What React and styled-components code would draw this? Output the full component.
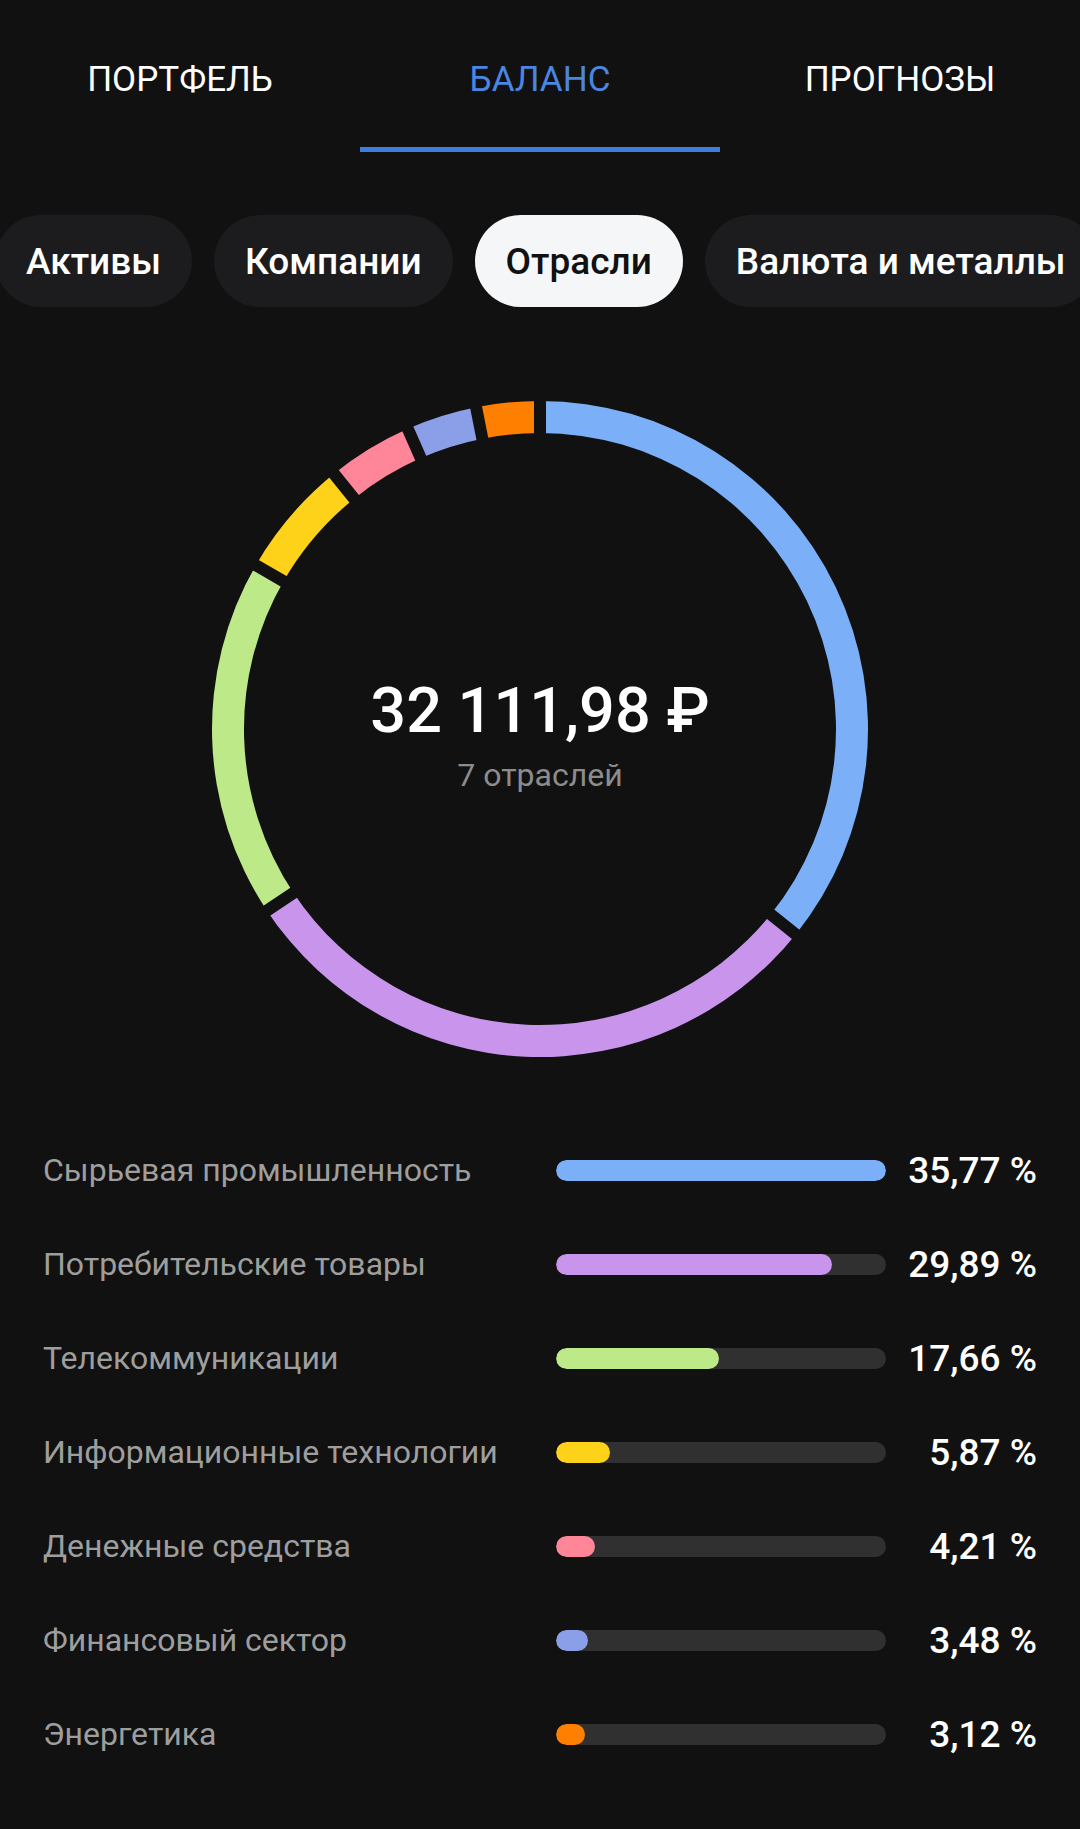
import React from "react";
import styled, { createGlobalStyle } from "styled-components";

const GlobalStyle = createGlobalStyle`
  html, body { margin: 0; padding: 0; background: #111111; }
  body { font-family: Roboto, "Noto Sans", "DejaVu Sans", sans-serif; color: #fff; }
  * { box-sizing: border-box; }
`;

const Page = styled.div`
  width: 1080px;
  min-height: 1829px;
  background: #111111;
  overflow: hidden;
`;

const Tabs = styled.nav`
  display: flex;
`;

const Tab = styled.div`
  flex: 1;
  display: flex;
  flex-direction: column;
`;

const TabLabel = styled.div`
  height: 147px;
  padding-top: 11px;
  display: flex;
  align-items: center;
  justify-content: center;
  font-size: 35px;
  font-weight: 400;
  color: ${(p) => (p.$active ? "#4a86e0" : "#ffffff")};
`;

const TabIndicator = styled.div`
  height: 5px;
  background: ${(p) => (p.$active ? "#3d7ce0" : "transparent")};
`;

const Chips = styled.div`
  display: flex;
  gap: 22px;
  margin: 63px 0 0 -5px;
  white-space: nowrap;
`;

const Chip = styled.div`
  flex: none;
  height: 92px;
  padding: 0 31px;
  border-radius: 46px;
  display: flex;
  align-items: center;
  font-size: 37px;
  font-weight: 500;
  background: ${(p) => (p.$active ? "#f5f6f8" : "#1c1c1e")};
  color: ${(p) => (p.$active ? "#111111" : "#ffffff")};
`;

const ChartWrap = styled.div`
  margin-top: 94px;
  display: grid;
  justify-content: center;
  & > * { grid-area: 1 / 1; }
`;

const Center = styled.div`
  display: flex;
  flex-direction: column;
  align-items: center;
  justify-content: center;
  padding-top: 12px;
  gap: 8px;
`;

const Total = styled.div`
  font-size: 63px;
  line-height: 72px;
  font-weight: 500;
  color: #ffffff;
`;

const Sub = styled.div`
  font-size: 32px;
  line-height: 40px;
  color: #8c8c8c;
`;

const List = styled.div`
  margin-top: 66px;
  display: flex;
  flex-direction: column;
`;

const Row = styled.div`
  height: 94px;
  padding: 0 43px;
  display: grid;
  grid-template-columns: 513px 330px 1fr;
  align-items: center;
`;

const Label = styled.div`
  font-size: 32px;
  color: #9e9e9e;
  white-space: nowrap;
`;

const Track = styled.div`
  height: 21px;
  border-radius: 11px;
  background: #303030;
  overflow: hidden;
`;

const Fill = styled.div`
  height: 100%;
  border-radius: 11px;
  background: ${(p) => p.$color};
`;

const Percent = styled.div`
  text-align: right;
  font-size: 37px;
  font-weight: 500;
  color: #ffffff;
`;

const items = [
  { name: "Сырьевая промышленность", value: 35.77, color: "#7bafF8" },
  { name: "Потребительские товары", value: 29.89, color: "#c995ec" },
  { name: "Телекоммуникации", value: 17.66, color: "#bde989" },
  { name: "Информационные технологии", value: 5.87, color: "#ffd21a" },
  { name: "Денежные средства", value: 4.21, color: "#ff8699" },
  { name: "Финансовый сектор", value: 3.48, color: "#8b9ee8" },
  { name: "Энергетика", value: 3.12, color: "#ff8000" },
];

const fmt = (v) => v.toFixed(2).replace(".", ",") + " %";

function Donut() {
  const size = 656;
  const c = size / 2;
  const rOut = 328;
  const rIn = 296;
  const total = items.reduce((s, i) => s + i.value, 0);
  const pt = (r, deg) => {
    const a = (deg * Math.PI) / 180;
    return [c + r * Math.sin(a), c - r * Math.cos(a)];
  };
  let acc = 0;
  const segs = [];
  const bounds = [];
  items.forEach((it) => {
    const a0 = (acc / total) * 360;
    acc += it.value;
    const a1 = (acc / total) * 360;
    bounds.push(a0);
    const large = a1 - a0 > 180 ? 1 : 0;
    const [x0, y0] = pt(rOut, a0);
    const [x1, y1] = pt(rOut, a1);
    const [x2, y2] = pt(rIn, a1);
    const [x3, y3] = pt(rIn, a0);
    segs.push(
      <path
        key={it.name}
        fill={it.color}
        d={`M${x0} ${y0} A${rOut} ${rOut} 0 ${large} 1 ${x1} ${y1} L${x2} ${y2} A${rIn} ${rIn} 0 ${large} 0 ${x3} ${y3} Z`}
      />
    );
  });
  return (
    <svg width={size} height={size} viewBox={`0 0 ${size} ${size}`}>
      {segs}
      {bounds.map((a) => {
        const [x0, y0] = pt(rIn - 6, a);
        const [x1, y1] = pt(rOut + 6, a);
        return (
          <line key={a} x1={x0} y1={y0} x2={x1} y2={y1} stroke="#111111" strokeWidth="12" />
        );
      })}
    </svg>
  );
}

export default function App() {
  const max = Math.max(...items.map((i) => i.value));
  return (
    <Page>
      <GlobalStyle />
      <Tabs>
        {["ПОРТФЕЛЬ", "БАЛАНС", "ПРОГНОЗЫ"].map((t) => (
          <Tab key={t}>
            <TabLabel $active={t === "БАЛАНС"}>{t}</TabLabel>
            <TabIndicator $active={t === "БАЛАНС"} />
          </Tab>
        ))}
      </Tabs>
      <Chips>
        {["Активы", "Компании", "Отрасли", "Валюта и металлы"].map((c) => (
          <Chip key={c} $active={c === "Отрасли"}>{c}</Chip>
        ))}
      </Chips>
      <ChartWrap>
        <Donut />
        <Center>
          <Total>32 111,98 ₽</Total>
          <Sub>7 отраслей</Sub>
        </Center>
      </ChartWrap>
      <List>
        {items.map((it) => (
          <Row key={it.name}>
            <Label>{it.name}</Label>
            <Track>
              <Fill $color={it.color} style={{ width: `${(it.value / max) * 100}%` }} />
            </Track>
            <Percent>{fmt(it.value)}</Percent>
          </Row>
        ))}
      </List>
    </Page>
  );
}
